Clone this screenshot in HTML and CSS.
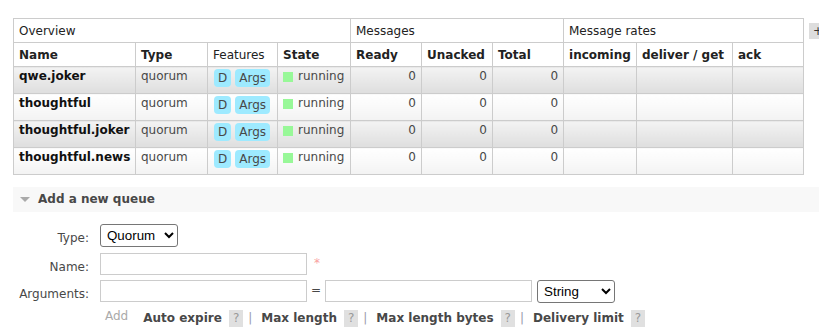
FILE: index.html
```html
<!DOCTYPE html>
<html>
<head>
<meta charset="utf-8">
<title>Queues</title>
<link rel="stylesheet" href="styles.css">
</head>
<body>
<div class="page">
  <div class="queues">
    <table class="list">
      <colgroup>
        <col class="c-name"><col class="c-type"><col class="c-feat"><col class="c-state">
        <col class="c-num"><col class="c-num"><col class="c-num">
        <col class="c-in"><col class="c-del"><col class="c-ack">
      </colgroup>
      <thead>
        <tr class="group">
          <th colspan="4">Overview</th>
          <th colspan="3">Messages</th>
          <th colspan="3">Message rates</th>
        </tr>
        <tr class="cols">
          <th class="b">Name</th>
          <th class="b">Type</th>
          <th>Features</th>
          <th class="b">State</th>
          <th class="b">Ready</th>
          <th class="b">Unacked</th>
          <th class="b">Total</th>
          <th class="b">incoming</th>
          <th class="b">deliver / get</th>
          <th class="b">ack</th>
        </tr>
      </thead>
      <tbody>
        <tr class="alt2">
          <td class="name">qwe.joker</td><td>quorum</td>
          <td><div class="feat"><abbr class="badge">D</abbr><abbr class="badge">Args</abbr></div></td>
          <td><div class="state"><span class="dot"></span>running</div></td>
          <td class="num">0</td><td class="num">0</td><td class="num">0</td><td></td><td></td><td></td>
        </tr>
        <tr class="alt1">
          <td class="name">thoughtful</td><td>quorum</td>
          <td><div class="feat"><abbr class="badge">D</abbr><abbr class="badge">Args</abbr></div></td>
          <td><div class="state"><span class="dot"></span>running</div></td>
          <td class="num">0</td><td class="num">0</td><td class="num">0</td><td></td><td></td><td></td>
        </tr>
        <tr class="alt2">
          <td class="name">thoughtful.joker</td><td>quorum</td>
          <td><div class="feat"><abbr class="badge">D</abbr><abbr class="badge">Args</abbr></div></td>
          <td><div class="state"><span class="dot"></span>running</div></td>
          <td class="num">0</td><td class="num">0</td><td class="num">0</td><td></td><td></td><td></td>
        </tr>
        <tr class="alt1">
          <td class="name">thoughtful.news</td><td>quorum</td>
          <td><div class="feat"><abbr class="badge">D</abbr><abbr class="badge">Args</abbr></div></td>
          <td><div class="state"><span class="dot"></span>running</div></td>
          <td class="num">0</td><td class="num">0</td><td class="num">0</td><td></td><td></td><td></td>
        </tr>
      </tbody>
    </table>
    <span class="plusminus">+/-</span>
  </div>

  <div class="section">
    <h2 class="section-title"><span class="tri"></span>Add a new queue</h2>
    <form class="form">
      <label class="lbl">Type:</label>
      <div class="ctl">
        <select class="sel sel-type"><option>Quorum</option><option>Classic</option><option>Stream</option></select>
      </div>
      <label class="lbl">Name:</label>
      <div class="ctl ctl-name">
        <input type="text" class="txt"><span class="mand">*</span>
      </div>
      <label class="lbl">Arguments:</label>
      <div class="ctl">
        <input type="text" class="txt"><span class="eq">=</span><input type="text" class="txt">
        <select class="sel sel-str"><option>String</option><option>Number</option><option>Boolean</option><option>List</option></select>
      </div>
      <div class="lbl"></div>
      <div class="links">
        <span class="add">Add</span>
        <span class="arg">Auto expire</span><span class="help">?</span><span class="sep">|</span>
        <span class="arg">Max length</span><span class="help">?</span><span class="sep">|</span>
        <span class="arg">Max length bytes</span><span class="help">?</span><span class="sep">|</span>
        <span class="arg">Delivery limit</span><span class="help">?</span>
      </div>
    </form>
  </div>
</div>
</body>
</html>
```
FILE: styles.css
```css
html, body {
  margin: 0;
  padding: 0;
  overflow: hidden;
  background: #fff;
}
body {
  font: 12px "DejaVu Sans", Verdana, sans-serif;
  color: #484848;
}
.page {
  padding: 18px 0 0 13px;
}
.queues {
  display: flex;
  align-items: flex-start;
}
table.list {
  flex: none;
  border-collapse: collapse;
  table-layout: fixed;
  width: 791px;
}
col.c-name { width: 122px; }
col.c-type { width: 72px; }
col.c-feat { width: 70px; }
col.c-state { width: 73px; }
col.c-num { width: 71px; }
col.c-in { width: 73px; }
col.c-del { width: 96px; }
col.c-ack { width: 71px; }

table.list th, table.list td {
  border: 1px solid #ccc;
  vertical-align: top;
  text-align: left;
  white-space: nowrap;
  overflow: hidden;
}
table.list th {
  font-weight: normal;
  color: #222;
  padding: 6px 5px 5px 5px;
  line-height: 12px;
  background: #fff;
}
table.list th.b { font-weight: bold; }
table.list td {
  padding: 2px 5px 6px 5px;
}
table.list tr.alt2 td { background: linear-gradient(#f3f3f3, #dedede); }
table.list tr.alt1 td { background: linear-gradient(#ffffff, #f3f3f3); }
table.list td.name { font-weight: bold; color: #111; }
table.list td.num { text-align: right; }

.feat {
  display: flex;
  gap: 4px;
  padding-left: 1px;
}
.badge {
  display: block;
  height: 18px;
  line-height: 18px;
  padding: 0 4px;
  border-radius: 4px;
  background: #9eeaff;
  color: #484848;
  text-decoration: none;
}
.state {
  display: flex;
  align-items: flex-start;
}
.dot {
  width: 10px;
  height: 10px;
  margin: 3px 5px 0 0;
  background: #98f898;
  flex: none;
}
.plusminus {
  flex: none;
  margin: 5px 0 0 5px;
  padding: 2px 4px;
  line-height: 12px;
  background: #ddd;
  color: #333;
}

.section {
  margin-top: 12px;
}
.section-title {
  display: flex;
  align-items: center;
  margin: 0;
  padding: 5px 5px 5px 7px;
  line-height: 15px;
  font-size: 12px;
  font-weight: bold;
  color: #484848;
  background: #f8f8f8;
}
.tri {
  width: 0;
  height: 0;
  border-left: 5px solid transparent;
  border-right: 5px solid transparent;
  border-top: 5px solid #aaa;
  margin-right: 8px;
}
.form {
  display: grid;
  grid-template-columns: 76px auto;
  column-gap: 11px;
  padding-top: 12px;
}
.lbl {
  text-align: right;
  padding-top: 7px;
  color: #484848;
}
.ctl {
  display: flex;
  align-items: flex-start;
  margin-bottom: 6px;
}
.ctl-name {
  margin-bottom: 5px;
}
.sel {
  font: 13.33px "Liberation Sans", Arial, sans-serif;
  color: #000;
  height: 23px;
  width: 78px;
  border: 1px solid #767676;
  border-radius: 3px;
  background: #fff;
  padding: 0 2px;
  margin: 0;
}
.txt {
  box-sizing: border-box;
  width: 207px;
  height: 22px;
  border: 1px solid #ccc;
  margin: 0;
  padding: 3px;
  font: 12px "DejaVu Sans", Verdana, sans-serif;
}
.mand {
  color: #f9a0a0;
  padding: 3px 6px 0 7px;
}
.eq {
  padding: 3px 4px 0 4px;
}
.sel-str {
  margin-left: 5px;
}
.links {
  display: flex;
  align-items: flex-start;
  padding-left: 5px;
  margin-top: 0;
}
.add {
  color: #aaa;
  margin-right: 15px;
}
.arg {
  font-weight: bold;
  color: #484848;
  margin-top: 2px;
}
.help {
  background: #e0e0e0;
  color: #999;
  padding: 1px 4px 2px 4px;
  margin: 1px 0 0 7px;
}
.sep {
  color: #99a;
  margin: 2px 9px 0 5px;
}
```
